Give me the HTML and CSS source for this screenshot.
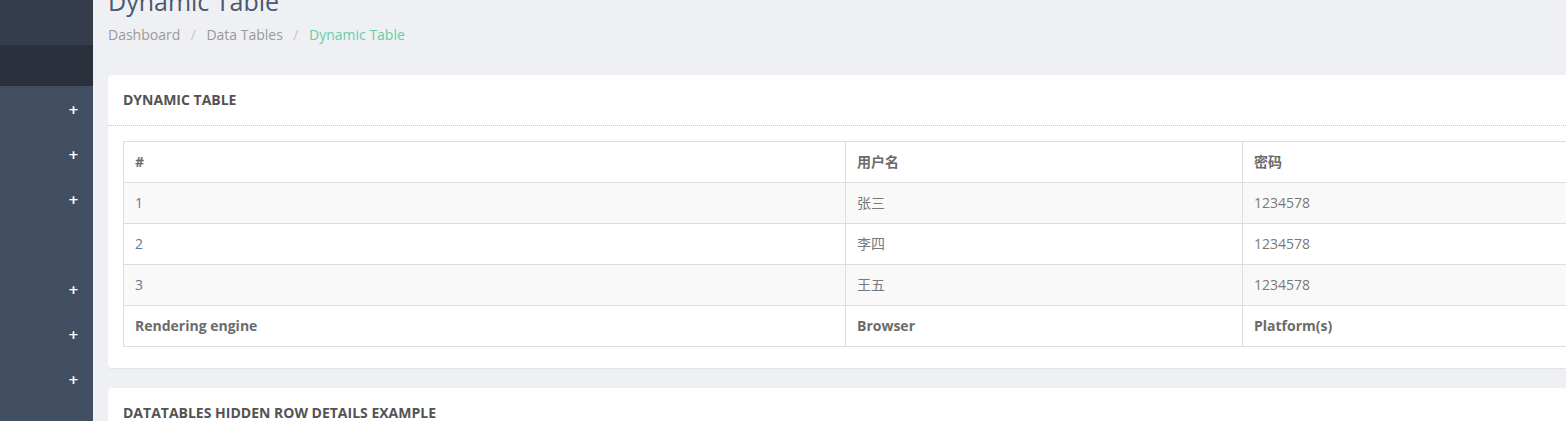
FILE: index.html
```html
<!DOCTYPE html>
<html lang="zh">
<head>
<meta charset="utf-8">
<title>Dynamic Table</title>
<link rel="stylesheet" href="styles.css">
</head>
<body>
<div class="layout">
  <aside class="sidebar">
    <div class="side-top"></div>
    <div class="side-active"></div>
    <ul class="side-menu">
      <li class="item"><span class="plus">+</span></li>
      <li class="item"><span class="plus">+</span></li>
      <li class="item"><span class="plus">+</span></li>
      <li class="item"></li>
      <li class="item"><span class="plus">+</span></li>
      <li class="item"><span class="plus">+</span></li>
      <li class="item"><span class="plus">+</span></li>
      <li class="item"><span class="plus">+</span></li>
    </ul>
  </aside>
  <main class="main">
    <div class="page-head">
      <h1 class="page-title">Dynamic Table</h1>
      <ol class="breadcrumb">
        <li><a>Dashboard</a></li>
        <li class="sep">/</li>
        <li><a>Data Tables</a></li>
        <li class="sep">/</li>
        <li class="active">Dynamic Table</li>
      </ol>
    </div>
    <section class="card">
      <header class="card-head">Dynamic Table</header>
      <div class="card-body">
        <table class="table">
          <colgroup>
            <col class="c1"><col class="c2"><col class="c3">
          </colgroup>
          <thead>
            <tr><th>#</th><th>用户名</th><th>密码</th></tr>
          </thead>
          <tbody>
            <tr class="odd"><td class="num">1</td><td>张三</td><td>1234578</td></tr>
            <tr><td class="num">2</td><td>李四</td><td>1234578</td></tr>
            <tr class="odd"><td class="num">3</td><td>王五</td><td>1234578</td></tr>
          </tbody>
          <tfoot>
            <tr><th>Rendering engine</th><th>Browser</th><th>Platform(s)</th></tr>
          </tfoot>
        </table>
      </div>
    </section>
    <section class="card">
      <header class="card-head">DataTables hidden row details example</header>
    </section>
  </main>
</div>
</body>
</html>
```
FILE: styles.css
```css
html, body {
  margin: 0;
  padding: 0;
  height: 100%;
  overflow: hidden;
}
body {
  background: #eff0f4;
  font-family: "Open Sans", "Noto Sans CJK SC", sans-serif;
  font-size: 14px;
  color: #797979;
}
.layout {
  display: flex;
  min-height: 100%;
}
.sidebar {
  width: 93px;
  flex-shrink: 0;
  background: #424f63;
  display: flex;
  flex-direction: column;
}
.side-top {
  height: 45px;
  background: #353d4d;
}
.side-active {
  height: 41px;
  background: #2a303c;
}
.side-menu {
  list-style: none;
  margin: 0;
  padding: 0;
}
.item {
  height: 45px;
  display: flex;
  align-items: center;
  justify-content: flex-end;
  padding-right: 14px;
}
.item:first-child {
  margin-top: 1px;
}
.plus {
  color: #fff;
  font-family: "DejaVu Sans", sans-serif;
  font-weight: bold;
  font-size: 13px;
  line-height: 1;
}
.main {
  padding-left: 15px;
  flex-shrink: 0;
}
.page-head {
  margin-top: -12px;
}
.page-title {
  margin: 0;
  font-size: 25px;
  font-weight: 400;
  line-height: 26px;
  color: #49586e;
}
.breadcrumb {
  list-style: none;
  margin: 11px 0 0;
  padding: 0;
  display: flex;
  gap: 9px;
  font-size: 14px;
  line-height: 20px;
  color: #999;
}
.breadcrumb a {
  color: #999;
}
.breadcrumb .sep {
  color: #c6c6c6;
  padding: 0 1.5px;
}
.breadcrumb .active {
  color: #65cea7;
}
.card {
  width: 1480px;
  background: #fff;
  border-radius: 4px;
  box-shadow: 0 1px 1px rgba(0, 0, 0, 0.06);
  margin-top: 30px;
}
.card + .card {
  margin-top: 20px;
}
.card-head {
  padding: 15px;
  line-height: 20px;
  font-size: 14px;
  font-weight: 700;
  text-transform: uppercase;
  color: #535353;
  border-bottom: 1px dotted #c8c8c8;
}
.card-body {
  padding: 15px 15px 21px;
}
.table {
  width: 100%;
  border-collapse: collapse;
  table-layout: fixed;
  border: 1px solid #ddd;
}
.c1 { width: 722px; }
.c2 { width: 397px; }
.table th,
.table td {
  border: 1px solid #ddd;
  padding: 10px 11px;
  line-height: 20px;
  text-align: left;
  font-size: 14px;
}
.table th {
  font-weight: 700;
  color: #6b6b6b;
}
.table td {
  color: #797979;
}
.table td.num {
  color: #6f7690;
}
.table tr.odd td {
  background: #f9f9f9;
}
```
